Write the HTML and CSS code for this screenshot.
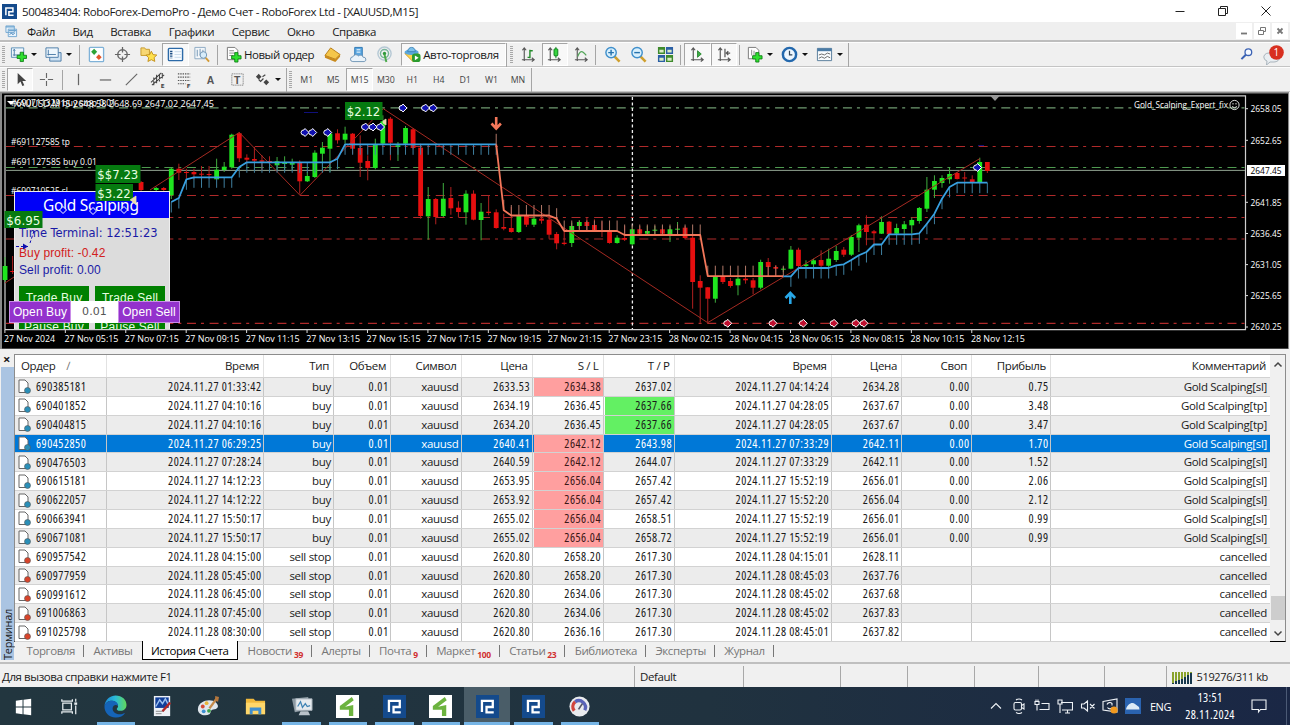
FILE: index.html
```html
<!DOCTYPE html>
<html lang="ru">

<head>
  <meta charset="UTF-8" />
  <title>500483404: RoboForex-DemoPro</title>
  <link rel="stylesheet" href="styles.css">
</head>

<body>
  <svg class="defs" width="0" height="0">
    <defs>
      <symbol id="logo-rf" viewBox="0 0 24 24">
        <rect width="24" height="24" fill="#144a8c" />
        <path d="M6.2 17.8V6.2h11.3v6.3H11v5.6h7.5" fill="none" stroke="#fff" stroke-width="2.4" />
      </symbol>
      <symbol id="logo-green" viewBox="0 0 24 24">
        <rect width="24" height="24" fill="#fff" />
        <path d="M16.500 2L4 11.500v4h9.500V22H18V10.500l-8.500 1.700 9-6.700z" fill="#6cb33f" />
      </symbol>
      <symbol id="axes" viewBox="0 0 18 18">
        <path d="M4.500 2v14M2 14.500h13M2.500 4.500l2-2.500 2 2.500M12.500 12.500l2.500 2-2.500 2" fill="none" stroke="#555" stroke-width="1.200" />
      </symbol>
      <symbol id="plus" viewBox="0 0 12 12">
        <path d="M4.300 1h3.400v3.300H11v3.400H7.700V11H4.300V7.700H1V4.300h3.300z" fill="#2fe02f" stroke="#0a7a12" stroke-width=".9" />
      </symbol>
    </defs>
  </svg>

  <div class="titlebar">
    <svg class="app-icon" viewBox="0 0 24 24"><use href="#logo-rf" /></svg>
    <span class="title">500483404: RoboForex-DemoPro - Демо Счет - RoboForex Ltd - [XAUUSD,M15]</span>
    <div class="win-buttons">
      <svg viewBox="0 0 12 12"><path d="M1.500 6.500h9" /></svg>
      <svg viewBox="0 0 12 12"><path d="M1.500 3.500h7v7h-7zM3.500 3.500v-2h7v7h-2" /></svg>
      <svg viewBox="0 0 12 12"><path d="M1.500 1.500l9 9M10.500 1.500l-9 9" /></svg>
    </div>
  </div>

  <div class="menubar">
    <svg class="menu-icon" viewBox="0 0 14 14">
      <path d="M1 1h9v7H1zM3.500 4.500h9v8h-9z" fill="#eaf4fc" stroke="#6fa5cf" />
      <path d="M1 2h9M4 6h8" stroke="#6fa5cf" stroke-width="1.500" />
      <path d="M5 10.500l2-2 1.500 2 2-2" fill="none" stroke="#3a7bb5" />
    </svg>
    <span class="menu m1">Файл</span>
    <span class="menu">Вид</span>
    <span class="menu">Вставка</span>
    <span class="menu">Графики</span>
    <span class="menu">Сервис</span>
    <span class="menu">Окно</span>
    <span class="menu">Справка</span>
    <div class="child-buttons">
      <svg viewBox="0 0 16 16"><path d="M5 10.500h6" stroke-width="1.800" /></svg>
      <svg viewBox="0 0 16 16"><path d="M4.500 7.500h5v4h-5zM6.500 7v-2.500h5v4H10" /></svg>
      <svg viewBox="0 0 16 16"><path d="M5.500 5.500l5 5M10.500 5.500l-5 5" stroke-width="1.800" /></svg>
    </div>
  </div>

  <div class="toolbar main-tools">
    <i class="grip"></i>
    <div class="tool drop">
      <svg viewBox="0 0 18 18"><path d="M1.500 2h13v10h-13z" fill="#eef6fc" stroke="#5b8fb8" /><path d="M4.500 3.500v7M3 9.500h9M3.500 5l1-1.500 1 1.500" fill="none" stroke="#4a7ba8" /><use href="#plus" x="6.500" y="5.500" width="12" height="12" /></svg>
      <i class="arrow"></i>
    </div>
    <div class="tool drop">
      <svg viewBox="0 0 18 18"><path d="M5 7h12v9H5z" fill="#cfe2f2" stroke="#4a7ba8" /><path d="M1 2h13v10H1z" fill="#eef6fc" stroke="#4a7ba8" /><path d="M3.500 4v6M2.500 9h9" fill="none" stroke="#4a7ba8" /></svg>
      <i class="arrow"></i>
    </div>
    <i class="sep"></i>
    <div class="tool"><svg viewBox="0 0 18 18"><rect x="1.500" y="1.500" width="15" height="15" rx="1" fill="#fdfeff" stroke="#7fb2d8" stroke-width="1.400" /><path d="M6.500 3l3.200 3.200-3.200 3.200-3.200-3.200z" fill="#2aa336" /><path d="M11.500 8.800l3 3-3 3-3-3z" fill="#e2552a" /></svg></div>
    <div class="tool"><svg viewBox="0 0 18 18"><circle cx="9" cy="9" r="5" fill="none" stroke="#666" stroke-width="1.500" /><path d="M9 1v6M9 11v6M1 9h6M11 9h6" stroke="#666" stroke-width="1.300" /></svg></div>
    <div class="tool"><svg viewBox="0 0 18 18"><path d="M1 2h4l1 1.500h4V10H1z" fill="#f7d774" stroke="#c79a2b" /><path d="M12 5.500l1.800 3.600 4 .5-2.900 2.700.8 4L12 14.500l-3.600 1.900.8-4-2.900-2.800 4-.5z" fill="#ffe14d" stroke="#c28f1b" /></svg></div>
    <div class="tool pressed"><svg viewBox="0 0 18 18"><rect x="1.500" y="2.500" width="15" height="13" rx="1" fill="#f6fbff" stroke="#2c6aa8" stroke-width="1.500" /><path d="M4.500 5v8" stroke="#1b4d84" stroke-width="2.500" stroke-dasharray="1.500 1" /><path d="M8 6h7M8 9h7M8 12h7" stroke="#c7daea" /></svg></div>
    <div class="tool"><svg viewBox="0 0 18 18"><path d="M2 1.500h11v12H2z" fill="#f4f7fa" stroke="#8ba9c2" /><path d="M4.500 4v7M7.500 3v7M10.500 4v5" stroke="#6f93b3" /><circle cx="11" cy="9.500" r="3.500" fill="#d7ecfa" stroke="#6f93b3" /><path d="M13.500 12.500l3.500 4" stroke="#d39a35" stroke-width="2" /></svg></div>
    <i class="sep"></i>
    <div class="tool order">
      <svg viewBox="0 0 18 18"><path d="M2.500 1.500h8l3 3v10h-11z" fill="#fff" stroke="#777" /><path d="M4.500 5h5M4.500 7.500h6M4.500 10h4" stroke="#888" /><use href="#plus" x="6" y="6" width="12" height="12" /></svg>
      <span>Новый ордер</span>
    </div>
    <div class="tool"><svg viewBox="0 0 18 18"><path d="M7 2l10 7-5 5L1 10z" fill="#f5c64a" stroke="#b77b14" /><path d="M1 10l11 4 5-5v2.500L12 17 1 12.500z" fill="#c98a1c" /></svg></div>
    <div class="tool"><svg viewBox="0 0 18 18"><path d="M5 1.500h8v10H5z" fill="#5ba7e0" stroke="#2d77b4" /><path d="M7 4h4M7 6.500h4" stroke="#fff" /><path d="M3 16.500a2.500 2.500 0 010-5 3.500 3.500 0 016-1 3 3 0 015 1.500 2 2 0 011 4.500z" fill="#eaf3fa" stroke="#6f94b5" /></svg></div>
    <div class="tool"><svg viewBox="0 0 18 18" fill="none"><circle cx="9" cy="8" r="7" stroke="#b5c8d4" stroke-width="1.500" /><circle cx="9" cy="8" r="4.300" stroke="#76b49a" stroke-width="1.500" /><circle cx="9" cy="8" r="1.800" fill="#2f9a3b" /><path d="M9 9l2 8" stroke="#4caa4a" stroke-width="2" /></svg></div>
    <div class="tool auto pressed">
      <svg viewBox="0 0 18 18"><path d="M1 8h14l-5 9z" fill="#ffd34d" stroke="#d09a20" /><ellipse cx="8" cy="6.500" rx="7.500" ry="3" fill="#5aa7dc" /><path d="M4 6c0-6 8-6 8 0z" fill="#7cc0ea" stroke="#3d84b9" /><rect x="8.500" y="8" width="9" height="9" rx="3" fill="#2b9c2f" /><path d="M11.500 10l4 2.500-4 2.500z" fill="#fff" /></svg>
      <span>Авто-торговля</span>
    </div>
    <i class="sep tight"></i>
    <i class="grip"></i>
    <div class="tool"><svg viewBox="0 0 18 18"><use href="#axes" /><path d="M10.500 4v9M10.500 5h3M8 12h2.500" stroke="#238a2b" stroke-width="1.500" /></svg></div>
    <div class="tool pressed"><svg viewBox="0 0 18 18"><use href="#axes" /><path d="M10.500 1v12" stroke="#0c7d1c" /><rect x="8.500" y="3" width="4" height="7.500" rx="1" fill="#37d43e" stroke="#0c7d1c" /></svg></div>
    <div class="tool"><svg viewBox="0 0 18 18"><use href="#axes" /><path d="M5 11c3-7 5-6 9-1" fill="none" stroke="#54a65a" stroke-width="1.300" /></svg></div>
    <i class="sep near"></i>
    <div class="tool"><svg viewBox="0 0 18 18"><path d="M11 11l5.500 5.500" stroke="#cf9f2d" stroke-width="2.800" /><circle cx="7.500" cy="7" r="5.500" fill="#d9f0fd" stroke="#3f8fcb" stroke-width="1.500" /><path d="M4.500 7h6M7.500 4v6" stroke="#2672ad" stroke-width="1.500" /></svg></div>
    <div class="tool"><svg viewBox="0 0 18 18"><path d="M11 11l5.500 5.500" stroke="#cf9f2d" stroke-width="2.800" /><circle cx="7.500" cy="7" r="5.500" fill="#d9f0fd" stroke="#3f8fcb" stroke-width="1.500" /><path d="M4.500 7h6" stroke="#2672ad" stroke-width="1.500" /></svg></div>
    <div class="tool"><svg viewBox="0 0 18 18"><path d="M1 1h7.500v7.500H1zM9.500 9.500H17V17H9.500z" fill="#3e8a2c" /><path d="M9.500 1H17v7.500H9.500zM1 9.500h7.500V17H1z" fill="#2a5fa5" /><path d="M2.500 4h4.500v3H2.500zM11 4h4.500v3H11zM2.500 12.500h4.500v3H2.500zM11 12.500h4.500v3H11z" fill="#d8ecc6" /></svg></div>
    <i class="sep"></i>
    <div class="tool pressed"><svg viewBox="0 0 18 18"><use href="#axes" /><path d="M9 5l4 3.500L9 12z" fill="#3cab45" stroke="#167a20" stroke-width=".8" /></svg></div>
    <div class="tool pressed"><svg viewBox="0 0 18 18"><use href="#axes" /><path d="M9.500 3v9M15 7.500h-4M13 5.500l-2 2 2 2" fill="none" stroke="#555" stroke-width="1.300" /></svg></div>
    <i class="sep"></i>
    <div class="tool drop">
      <svg viewBox="0 0 18 18"><path d="M2.500 1.500h8l3 3v9h-11z" fill="#fff" stroke="#777" /><path d="M6 4v6M8.500 5v6" stroke="#888" /><use href="#plus" x="6" y="6" width="12" height="12" /></svg>
      <i class="arrow"></i>
    </div>
    <div class="tool drop">
      <svg viewBox="0 0 18 18"><circle cx="9" cy="9" r="7" fill="#eef7ff" stroke="#2368ad" stroke-width="2.600" /><path d="M9 5v4.500h3" fill="none" stroke="#345" stroke-width="1.300" /></svg>
      <i class="arrow"></i>
    </div>
    <div class="tool drop">
      <svg viewBox="0 0 18 18"><path d="M1.500 2.500h15v13h-15z" fill="#f8fbfd" stroke="#557b9a" /><path d="M1.500 4h15" stroke="#4b7ba5" stroke-width="3" /><path d="M3 9.500l3-1 3 1 3-2 3 1M3 13l3-1.500 3 1.500 3-2 3 1.500" fill="none" stroke="#666" /></svg>
      <i class="arrow"></i>
    </div>
    <i class="sep tight"></i>
    <div class="notices">
      <svg class="search" viewBox="0 0 14 14"><circle cx="9" cy="4.500" r="3.600" fill="#f5f9ff" stroke="#3b62b4" stroke-width="1.400" /><path d="M6.300 7.300L1.500 12" stroke="#3b62b4" stroke-width="2.200" /></svg>
      <svg class="chat" viewBox="0 0 22 20"><path d="M1 13a5 4 0 015-5h5a5 4 0 010 9H7l-3.500 3 .5-4a5 4 0 01-3-3z" fill="#e9eef2" stroke="#a9b4bc" /><circle cx="13.500" cy="7.500" r="7.300" fill="#d83020" /></svg>
      <b>1</b>
    </div>
  </div>

  <div class="toolbar draw-tools">
    <i class="grip"></i>
    <div class="tool pressed"><svg viewBox="0 0 18 18"><path d="M6 2v12l3-3 2 5 2-1-2-4.500h4z" fill="#444" /></svg></div>
    <div class="tool"><svg viewBox="0 0 18 18"><path d="M9 2v5.500M9 10.500V16M2 9h5.500M10.500 9H16" stroke="#666" stroke-width="1.200" /></svg></div>
    <i class="sep"></i>
    <div class="tool"><svg viewBox="0 0 18 18"><path d="M9 3v12" stroke="#666" stroke-width="1.300" /></svg></div>
    <div class="tool"><svg viewBox="0 0 18 18"><path d="M3 9.500h12" stroke="#666" stroke-width="1.300" /></svg></div>
    <div class="tool"><svg viewBox="0 0 18 18"><path d="M3 15L15 3" stroke="#666" stroke-width="1.200" /></svg></div>
    <div class="tool"><svg viewBox="0 0 18 18"><path d="M1 12L12 2M2 15L15 4M4 7v8M7 4v9M10 3v8M13 2v6" stroke="#444" stroke-width="1.100" /><text x="11.500" y="17.500">E</text></svg></div>
    <div class="tool"><svg viewBox="0 0 18 18"><path d="M2 3h13M2 6.500h13M2 10h13M2 13.500h8" stroke="#555" stroke-width="1.200" stroke-dasharray="1.500 1" /><text x="11.500" y="18">F</text></svg></div>
    <div class="tool"><svg viewBox="0 0 18 18"><text class="big" x="5" y="13.500">A</text></svg></div>
    <div class="tool"><svg viewBox="0 0 18 18"><rect x="3" y="3" width="12" height="12" fill="none" stroke="#666" stroke-dasharray="1 1" /><text class="big" x="5.200" y="13.500">T</text></svg></div>
    <div class="tool drop">
      <svg viewBox="0 0 18 18"><path d="M2 6l3-3 3 3-3 3zM10 12l3-3 3 3-3 3z" fill="#444" /><path d="M5 9l2 2 3-3M9 6l3-2" fill="none" stroke="#444" stroke-width="1.300" /></svg>
      <i class="arrow"></i>
    </div>
    <i class="sep tight"></i>
    <i class="grip"></i>
    <div class="tool tf">M1</div>
    <div class="tool tf">M5</div>
    <div class="tool tf pressed">M15</div>
    <div class="tool tf">M30</div>
    <div class="tool tf">H1</div>
    <div class="tool tf">H4</div>
    <div class="tool tf">D1</div>
    <div class="tool tf">W1</div>
    <div class="tool tf">MN</div>
    <i class="sep tight"></i>
  </div>

  <div class="chart">
    <svg id="chart" viewBox="0 92 1290 258"></svg>
    <div class="panel">
      <div class="panel-title">Gold Scalping</div>
      <div class="panel-body">
        <p class="clock-line">Time Terminal: 12:51:23</p>
        <p class="buy-line">Buy profit: -0.42</p>
        <p class="sell-line">Sell profit: 0.00</p>
        <div class="panel-buttons">
          <span>Trade Buy</span>
          <span>Trade Sell</span>
          <span>Pause Buy</span>
          <span>Pause Sell</span>
        </div>
      </div>
    </div>
    <div class="quick">
      <span class="q-btn">Open Buy</span>
      <span class="q-lot">0.01</span>
      <span class="q-btn">Open Sell</span>
    </div>
    <svg id="labels" viewBox="0 92 1290 258"></svg>
  </div>

  <div class="terminal">
    <div class="side">
      <span class="close">×</span>
      <div class="side-bar"><span>Терминал</span></div>
    </div>
    <div class="history">
      <div class="table-wrap">
        <div class="table" id="table">
          <div class="row head">
            <span class="left">Ордер<i class="sort">∕</i></span>
            <span>Время</span>
            <span>Тип</span>
            <span>Объем</span>
            <span>Символ</span>
            <span>Цена</span>
            <span>S / L</span>
            <span>T / P</span>
            <span>Время</span>
            <span>Цена</span>
            <span>Своп</span>
            <span>Прибыль</span>
            <span>Комментарий</span>
          </div>
        </div>
        <div class="scroll">
          <svg viewBox="0 0 10 10"><path d="M1.500 6.500L5 3l3.500 3.500" /></svg>
          <i class="thumb"></i>
          <svg viewBox="0 0 10 10"><path d="M1.500 3.500L5 7l3.500-3.500" /></svg>
        </div>
      </div>
      <div class="tabs">
        <span class="tab">Торговля</span>
        <span class="tab last">Активы</span>
        <span class="tab active">История Счета</span>
        <span class="tab">Новости<sub>39</sub></span>
        <span class="tab">Алерты</span>
        <span class="tab">Почта<sub>9</sub></span>
        <span class="tab">Маркет<sub>100</sub></span>
        <span class="tab">Статьи<sub>23</sub></span>
        <span class="tab">Библиотека</span>
        <span class="tab">Эксперты</span>
        <span class="tab">Журнал</span>
      </div>
    </div>
  </div>

  <div class="statusbar">
    <span>Для вызова справки нажмите F1</span>
    <span>Default</span>
    <span></span>
    <span></span>
    <span></span>
    <span></span>
    <span></span>
    <span></span>
    <span class="traffic">
      <svg viewBox="0 0 22 13"><path d="M1 13V1M4 13V1M7 13V1M10 13V1M13 13V1M16 13V1M19 13V1" stroke="#8aa32c" stroke-width="2" /><path d="M1 13v-1M4 13v-3M7 13V9M10 13V8M13 13V6M16 13V4M19 13V2" stroke="#17384d" stroke-width="2" /></svg>
      519276/311 kb
    </span>
  </div>

  <div class="taskbar">
    <div class="app"><svg viewBox="0 0 24 24"><path d="M4 6l7-1v7H4zM12 5l8-1.200V12h-8zM4 13h7v7l-7-1zM12 13h8v8.200L12 20z" fill="#fff" /></svg></div>
    <div class="app"><svg viewBox="0 0 24 24" fill="none" stroke="#e8edf0" stroke-width="1.300"><path d="M5 8.500h9v7H5zM4 4.500v2h11v-2M4 19.500v-2h11v2M18.500 4v3M18.500 11v9" /><path d="M17 9h3" stroke-width="2.500" /></svg></div>
    <div class="app open">
      <svg viewBox="0 0 24 24">
        <defs><linearGradient id="edge" x1="0" y1=".3" x2="1" y2=".3"><stop offset="0" stop-color="#1b86d8" /><stop offset=".5" stop-color="#2cbcd6" /><stop offset="1" stop-color="#62d95a" /></linearGradient></defs>
        <path d="M.5 11C1.500 4 7 .5 12 .5 19 .5 23.500 5 23.500 10.500c0 4-3 6-6 6-3.500 0-4.500-1.500-4-2.500 1-1 1.500-2 1-3.500C13.500 7 10 5.500 7 6 4 6.500 2 8 .5 11z" fill="url(#edge)" />
        <path d="M.5 11C2 7.500 5 6 8 6c4 0 7 2.500 6.500 5.500C13 9.500 9.500 10 9 13.500c-.5 4 4 7.500 9 6.500 1.500-.3 3-1 4-1-2 3-6 4.700-10 4.500C5 23.500 0 18 .5 11z" fill="#1564b8" />
      </svg>
    </div>
    <div class="app"><svg viewBox="0 0 24 24"><path d="M3 1h17v21H3z" fill="#eef1f6" /><path d="M4.500 2.500h14v11h-14z" fill="#123f9a" /><path d="M5 12l4-7 3 4 3-5 3 6" stroke="#9cc0f0" stroke-width="1.500" fill="none" /><path d="M5 17h8M5 19.500h6" stroke="#888" /><path d="M20 8l-8 9" stroke="#b02828" stroke-width="2.500" /></svg></div>
    <div class="app"><svg viewBox="0 0 24 24"><path d="M1 14C2 6 14 3 20 8c4 4 1 7-3 7-3 0-2 3-4 5-5 3-13 0-12-6z" fill="#dfe6ec" /><circle cx="6" cy="12" r="2" fill="#d64a35" /><circle cx="10" cy="8.500" r="2" fill="#e8b53a" /><circle cx="7" cy="17" r="2" fill="#3d8fd1" /><circle cx="12.500" cy="16.500" r="2" fill="#3aa04a" /><path d="M21 3l-8 11" stroke="#c58a4a" stroke-width="2.500" /><path d="M19 1l4 1-1 5-3-1z" fill="#b5773d" /></svg></div>
    <div class="app"><svg viewBox="0 0 24 24"><path d="M2 4h8l2 2h10v14H2z" fill="#f0b93c" /><path d="M2 8h20v12H2z" fill="#ffd76a" /><path d="M6 20v-7h12v7h-3v-3.500H9V20z" fill="#3f8fd0" /></svg></div>
    <div class="app open"><svg viewBox="0 0 24 24"><path d="M2 4l17-2 1 13-15 3z" fill="#8d9aa3" /><path d="M6 4h17v12H6z" fill="#e6ebef" stroke="#a4afb7" /><path d="M8 12l3-5 2 6 3-4 2 3 3-1" fill="none" stroke="#3f83b4" stroke-width="1.300" /><path d="M11 17h8l2 4H9z" fill="#b9c2c9" /></svg></div>
    <div class="app open"><svg><use href="#logo-green" /></svg></div>
    <div class="app open"><svg><use href="#logo-rf" /></svg></div>
    <div class="app open"><svg><use href="#logo-green" /></svg></div>
    <div class="app open current"><svg><use href="#logo-rf" /></svg></div>
    <div class="app open"><svg><use href="#logo-rf" /></svg></div>
    <div class="app open"><svg viewBox="0 0 24 24"><circle cx="12" cy="12" r="10.500" fill="#e9ebee" /><path d="M6.500 16.500A7 7 0 017.500 7" fill="none" stroke="#d2453c" stroke-width="3.500" /><path d="M7.500 7a7 7 0 0110 9" fill="none" stroke="#5a63b8" stroke-width="3.500" /><path d="M11 15l4-6" stroke="#556" stroke-width="1.800" /></svg></div>

    <div class="tray">
      <svg viewBox="0 0 16 16"><path d="M3 10.500l5-5 5 5" /></svg>
      <svg viewBox="0 0 16 16"><rect x="3" y="4.500" width="7.500" height="7.500" rx="1.500" /><path d="M10.500 7.500l2.500-1.500v5l-2.500-1.500M5 2c2-1.300 4-1.300 6 0M5 14.500c2 1.300 4 1.300 6 0" /></svg>
      <svg viewBox="0 0 16 16"><path d="M1 3.500v3h4v-3zM2 3.500v-2M4 3.500v-2M3 6.500v6M7.500 5.500H15v6H5.500" /></svg>
      <svg viewBox="0 0 16 16"><path d="M4 4.500h11.500v7.500H5M8 15h5M10.500 12v3M1 2h4v4H1zM3 6v9" /></svg>
      <svg viewBox="0 0 16 16"><path d="M1.500 6H4l3.500-3v10L4 10H1.500zM10 6l4.500 4.500M14.500 6L10 10.500" /></svg>
      <svg viewBox="0 0 16 16"><path d="M1 3.500L15 1v13L1 12z" /><path d="M5 6.500a3 3 0 015-1v2M10.500 9.500a3 3 0 01-5 0" /><circle cx="12" cy="12" r="3.600" fill="#f29a1f" stroke="none" /></svg>
      <svg viewBox="0 0 16 16"><rect width="16" height="16" fill="#2a63b0" stroke="none" /><path d="M1 11.500c1-5 6-8 9-5.500l4 3 .5 2.500z" fill="#dceaf6" stroke="none" /></svg>
      <span class="lang">ENG</span>
      <span class="clock">13:51<br>28.11.2024</span>
      <svg class="action" viewBox="0 0 16 16"><path d="M1 2h14v9.500H9.500L7.500 14v-2.500H1z" /></svg>
      <i class="peek"></i>
    </div>
  </div>
  <script src="script.js"></script>
</body>

</html>
```
FILE: styles.css
```css
* {
  box-sizing: border-box;
}

body {
  margin: 0;
  width: 1290px;
  height: 725px;
  overflow: hidden;
  background: #f0f0f0;
  font-family: "Open Sans", "Noto Sans", sans-serif;
  font-size: 11.5px;
  letter-spacing: -0.3px;
  color: #1a1a1a;
  display: flex;
  flex-direction: column;
}

.defs {
  position: absolute;
}

i {
  font-style: normal;
}

/* title and menu */
.titlebar {
  height: 22px;
  background: #fff;
  display: flex;
  align-items: center;
  padding-left: 2px;
  flex: none;
}

.app-icon {
  width: 15px;
  height: 15px;
}

.title {
  margin-left: 5px;
  letter-spacing: -0.38px;
  white-space: nowrap;
}

.win-buttons {
  margin-left: auto;
  display: flex;
  gap: 31px;
  padding-right: 18px;
}

.win-buttons svg {
  width: 12px;
  height: 12px;
  fill: none;
  stroke: #222;
}

.menubar {
  height: 20px;
  display: flex;
  align-items: center;
  background: #efefef;
  border-bottom: 2px solid #bdbdbd;
  padding-left: 5px;
  letter-spacing: -0.4px;
  flex: none;
}

.menu-icon {
  width: 13px;
  height: 13px;
}

.menu {
  margin-left: 17.6px;
}

.m1 {
  margin-left: 9px;
}

.child-buttons {
  margin-left: auto;
  display: flex;
  gap: 2px;
  padding-right: 2px;
}

.child-buttons svg {
  width: 16px;
  height: 16px;
  background: #fff;
  fill: none;
  stroke: #777;
}

/* toolbars */
.toolbar {
  height: 25px;
  display: flex;
  align-items: center;
  border-top: 1px solid #fdfdfd;
  border-bottom: 1px solid #c4c4c4;
  flex: none;
}

.main-tools {
  position: relative;
}

.grip {
  width: 3px;
  height: 17px;
  margin: 0 2px 0 2px;
  background: repeating-linear-gradient(#a8a8a8 0 1px, #efefef 1px 2px);
}

.main-tools .tight + .grip {
  margin-left: 3px;
}

.sep {
  width: 1px;
  height: 20px;
  margin: 0 3px 0 2px;
  background: #a5a5a5;
  flex: none;
}

.sep.near {
  margin: 0 3px 0 1px;
}

.sep.tight {
  height: 24px;
  margin: 0;
}

.tool {
  width: 26.4px;
  height: 23px;
  display: flex;
  align-items: center;
  justify-content: center;
  flex: none;
}

.tool svg {
  width: 17px;
  height: 17px;
  overflow: visible;
  flex: none;
}

.tool text {
  font: bold 6px "DejaVu Sans", sans-serif;
  fill: #444;
}

.tool text.big {
  font: bold 11px "Liberation Sans", sans-serif;
  fill: #555;
}

.drop {
  width: 35px;
  justify-content: flex-start;
  padding-left: 3px;
}

.arrow {
  margin-left: 4px;
  border: 3px solid transparent;
  border-top: 3px solid #111;
  border-bottom: 0;
}

.pressed {
  background: #f8f8f8;
  border: 1px solid #fff;
  border-top-color: #a5a5a5;
  border-left-color: #a5a5a5;
}

.order {
  width: 98px;
  justify-content: flex-start;
  padding-left: 4px;
  letter-spacing: -0.45px;
  white-space: nowrap;
}

.order span,
.auto span {
  margin-left: 2px;
}

.auto {
  width: 105px;
  margin-left: 3px;
  justify-content: flex-start;
  padding-left: 2px;
  letter-spacing: -0.4px;
  white-space: nowrap;
}

.tf {
  font-size: 8.8px;
  letter-spacing: -0.1px;
  color: #444;
}

.notices {
  margin-left: auto;
  display: flex;
  align-items: center;
  gap: 10px;
  padding-right: 5px;
  position: relative;
}

.search {
  width: 13px;
  height: 13px;
}

.chat {
  width: 22px;
  height: 20px;
}

.notices b {
  position: absolute;
  right: 11px;
  top: 0;
  font-size: 10px;
  font-weight: normal;
  color: #fff;
}

/* chart */
.chart {
  position: relative;
  height: 258px;
  overflow: hidden;
  flex: none;
}

#chart {
  display: block;
  width: 1290px;
  height: 258px;
}

#labels {
  position: absolute;
  left: 0;
  top: 0;
  width: 1290px;
  height: 258px;
}

.chart text {
  font-family: "Open Sans", "Noto Sans", sans-serif;
  font-size: 9px;
  letter-spacing: 0;
  fill: #fff;
}

.chart text.money {
  font-family: "DejaVu Sans", sans-serif;
  font-size: 13px;
  fill: #e9ffe0;
}

.panel {
  position: absolute;
  left: 14px;
  top: 99px;
  width: 156px;
  height: 138px;
  overflow: hidden;
  border: 1px solid #eee;
  border-bottom: 0;
  background: #dcdcdc;
}

.panel-title {
  height: 26px;
  line-height: 27px;
  background: #0000f8;
  color: #fff;
  font-size: 15.5px;
  padding-left: 28px;
  font-family: "Noto Sans", sans-serif;
}

.panel-body {
  padding: 5px 3px 0 4px;
}

.panel p {
  margin: 0;
  line-height: 20px;
  font-size: 12px;
  font-family: "Liberation Sans", sans-serif;
  letter-spacing: 0.1px;
  color: #1a1aa5;
}

.panel p.clock-line {
  font-family: "DejaVu Sans", sans-serif;
  font-size: 11.5px;
  letter-spacing: -0.05px;
}

.panel p.buy-line {
  color: #d22020;
}

.panel p.sell-line {
  line-height: 15px;
}

.panel-buttons {
  display: grid;
  grid-template-columns: 70px 70px;
  gap: 5px 6px;
  margin-top: 8px;
}

.panel-buttons span {
  height: 24px;
  line-height: 25px;
  background: #008000;
  color: #e6ffe0;
  text-align: center;
  font-family: "Liberation Sans", sans-serif;
  font-size: 12px;
  letter-spacing: 0.2px;
}

.quick {
  position: absolute;
  left: 9px;
  top: 209px;
  height: 21px;
  width: 171px;
  display: grid;
  grid-template-columns: 62px 47px 62px;
  font-family: "Liberation Sans", sans-serif;
  font-size: 12px;
  line-height: 20px;
  letter-spacing: 0.1px;
  text-align: center;
  white-space: nowrap;
}

.q-btn {
  background: #9332cc;
  border: 1px solid #c98be8;
  color: #fff;
}

.q-lot {
  background: #fff;
  color: #555;
  line-height: 22px;
  font-family: "DejaVu Sans", sans-serif;
  font-size: 11px;
}

/* terminal */
.terminal {
  height: 314px;
  display: flex;
  padding-top: 4px;
  border-bottom: 2px solid #bfbfbf;
  flex: none;
}

.side {
  width: 14px;
  display: flex;
  flex-direction: column;
}

.close {
  height: 13px;
  line-height: 10px;
  text-align: center;
  font-size: 13px;
  font-weight: bold;
  padding-right: 1px;
}

.side-bar {
  flex: 1;
  margin: 0 0 2px 1px;
  background: #aac4e2;
  writing-mode: vertical-rl;
  transform: rotate(180deg);
  font-size: 11px;
  line-height: 13px;
}

.history {
  flex: 1;
  display: flex;
  flex-direction: column;
  min-width: 0;
}

.table-wrap {
  height: 288px;
  border: 1px solid #8c8c8c;
  border-bottom: 1px solid #000;
  width: 1272px;
  display: flex;
  background: #fff;
}

.table {
  width: 1255px;
}

.row {
  display: grid;
  grid-template-columns: 92px 157px 70px 57px 70.5px 71px 71px 71px 157px 70.5px 70px 79px 219px;
  height: 18.86px;
  line-height: 17.5px;
  background: #fff;
  border-bottom: 1px solid #d2d2d2;
}

.row span {
  text-align: right;
  border-right: 1px solid #c6c6c6;
  padding-right: 2px;
  white-space: nowrap;
  overflow: hidden;
}

.row span:last-child {
  padding-right: 3px;
  border-right: 0;
}

.row .num {
  font-size: 12px;
  font-stretch: 75%;
  letter-spacing: 0.48px;
  padding-right: 1.5px;
}

.row.gray {
  background: #ececec;
}

.row.selected {
  background: #0078d7;
  color: #fff;
}

.row .id {
  text-align: left;
  display: flex;
  align-items: center;
  padding-left: 3px;
  gap: 5px;
}

.id svg {
  width: 13px;
  height: 15px;
}

.row .sl {
  margin-left: 1px;
  background: #ff9f9f;
  color: #3a1616;
}

.row .tp {
  margin-left: 1px;
  background: #63f063;
}

.row.head {
  height: 23px;
  line-height: 22px;
  letter-spacing: -0.35px;
}

.row.head span {
  padding-right: 4px;
  border-color: #e2e2e2;
}

.row.head .left {
  text-align: left;
  padding-left: 6px;
}

.sort {
  margin-left: 11px;
  color: #777;
}

.scroll {
  width: 15px;
  background: #f0f0f0;
  display: flex;
  flex-direction: column;
  align-items: center;
  padding: 5px 0 3px;
}

.scroll svg {
  width: 10px;
  height: 10px;
  fill: none;
  stroke: #444;
  stroke-width: 1.5;
}

.thumb {
  width: 14px;
  height: 24px;
  background: #cdcdcd;
  margin: auto 0 8px;
}

.tabs {
  display: flex;
  height: 20px;
  padding-left: 3px;
  color: #777;
  letter-spacing: -0.4px;
  line-height: 17px;
}

.tab {
  position: relative;
  height: 18px;
  padding: 0 9px 0 9.5px;
  white-space: nowrap;
}

.tab::after {
  content: "";
  position: absolute;
  right: 0;
  top: 3px;
  height: 12px;
  border-right: 1px solid #777;
}

.tab.last::after,
.tab.active::after {
  display: none;
}

.tab.active {
  background: #fff;
  color: #000;
  border: 1px solid #000;
  border-top: 0;
  height: 19px;
  margin-top: -1px;
  padding: 0 8.5px;
  line-height: 19px;
}

.tab sub {
  color: #d03030;
  font-size: 8.5px;
  font-weight: bold;
  vertical-align: -3px;
  line-height: 0;
  margin-left: 2px;
}

/* status bar */
.statusbar {
  height: 23px;
  display: grid;
  grid-template-columns: 635px 109px 97px 67px 67px 64px 66px 62px 1fr;
  padding: 2px 0;
  flex: none;
}

.statusbar span {
  border-right: 1px solid #a8a8a8;
  padding-left: 5px;
  line-height: 21px;
  letter-spacing: -0.42px;
  white-space: nowrap;
}

.statusbar span:first-child {
  padding-left: 2px;
}

.statusbar .traffic {
  border: 0;
  font-size: 11px;
  letter-spacing: -0.35px;
}

.traffic svg {
  width: 22px;
  height: 13px;
  vertical-align: -3px;
}

/* taskbar */
.taskbar {
  height: 38px;
  display: flex;
  background: linear-gradient(90deg, #22363f, #20323f 55%, #1a2745);
  flex: none;
}

.app {
  width: 46.4px;
  display: flex;
  align-items: center;
  justify-content: center;
  position: relative;
}

.app svg {
  width: 23px;
  height: 23px;
}

.app.open::after {
  content: "";
  position: absolute;
  left: 4px;
  right: 4px;
  bottom: 0;
  height: 3px;
  background: #76b5e6;
}

.app.current {
  background: #4a5d68;
}

.app.current::after {
  left: 0;
  right: 0;
}

.tray {
  margin-left: auto;
  display: flex;
  align-items: center;
  color: #fff;
}

.tray svg {
  width: 16px;
  height: 16px;
  margin-right: 6.8px;
  fill: none;
  stroke: #eef2f6;
  stroke-width: 1.1;
}

.lang {
  width: 21px;
  margin-left: 2px;
  font-size: 11px;
  letter-spacing: -0.5px;
}

.clock {
  width: 76px;
  margin: 0 3px 0 1px;
  text-align: center;
  line-height: 17px;
  font-size: 12px;
  font-stretch: 75%;
  letter-spacing: 0.35px;
}

.tray .action {
  margin-right: 19px;
}

.peek {
  width: 4px;
  height: 38px;
  border-left: 1px solid #4b5a75;
}
```
FILE: script.js
```js
(function () {
  var NS = 'http://www.w3.org/2000/svg';
  var chart = document.getElementById('chart');
  var labels = document.getElementById('labels');
  var STEP = 7.556;
  var X0 = 307.3;

  function el(name, attrs, parent) {
    var node = document.createElementNS(NS, name);
    for (var key in attrs) {
      node.setAttribute(key, attrs[key]);
    }
    (parent || chart).appendChild(node);
    return node;
  }

  function text(str, x, y, width, parent, cls) {
    var t = el('text', { x: x, y: y, textLength: width, lengthAdjust: 'spacingAndGlyphs' }, parent);
    if (cls) t.setAttribute('class', cls);
    t.textContent = str;
    return t;
  }

  function xOf(i) {
    return X0 + i * STEP;
  }

  // frame
  el('rect', { x: 0, y: 92, width: 1290, height: 258, fill: '#f0f0f0' });
  el('rect', { x: 0, y: 92, width: 1289, height: 257, fill: '#8a8a8a' });
  el('rect', { x: 2, y: 93.5, width: 1286, height: 255, fill: '#000' });
  el('path', { d: 'M5 95.8H1245.5V329.7H5z', fill: 'none', stroke: '#cfcfcf', 'stroke-width': 1.2 });

  // order levels
  [[107.8, '#6f9a70'], [146.5, '#b02a2a'], [167.5, '#4f9a50'], [195.5, '#b02a2a'], [217.5, '#b02a2a'], [239, '#b02a2a'], [323.3, '#b02a2a']].forEach(function (l) {
    el('path', { d: 'M6 ' + l[0] + 'H1245', stroke: l[1], 'stroke-width': 1.2, 'stroke-dasharray': '9 5 3 5.62' });
  });
  el('path', { d: 'M6 170.4H1245', stroke: '#8fa08f', 'stroke-width': 1 });
  el('path', { d: 'M632.4 97V329', stroke: '#eee', 'stroke-width': 1.3, 'stroke-dasharray': '3 2.5' });

  // index, body top, body bottom, high, low, u = up / d = down
  var candles = [
    [-40, 266, 280, 257, 282, 'u'], [-39, 271, 272, 256, 274, 'd'], [-22, 182, 190, 181, 191, 'd'], [-20, 188, 190, 187, 191, 'u'],
    [-19, 188, 190, 187, 191, 'd'], [-18, 168.7, 195.3, 167, 199, 'u'], [-17, 168.7, 172.7, 163.7, 180, 'd'], [-16, 172, 173, 168.7, 178.7, 'd'],
    [-15, 172, 174.3, 168.7, 179.3, 'd'], [-14, 173.7, 174.7, 166, 180, 'd'], [-13, 174, 175, 166, 178.7, 'd'], [-12, 169.7, 179.3, 158.7, 179.3, 'u'],
    [-11, 166.7, 170, 162, 172, 'u'], [-10, 134.7, 167.3, 133.7, 168.7, 'u'], [-9, 133.3, 158.3, 132, 162, 'd'], [-8, 157.7, 159.7, 154.3, 162, 'd'],
    [-7, 159, 160.7, 147, 162, 'd'], [-6, 160.3, 161.7, 155.3, 170.3, 'd'], [-5, 161, 162, 156.3, 165.3, 'd'], [-4, 161.3, 165.3, 157, 170.3, 'u'],
    [-3, 163, 164, 156.3, 170.3, 'u'], [-2, 162, 164.7, 158.7, 170.3, 'u'], [-1, 163, 181.3, 160.3, 193.7, 'd'], [0, 176, 181.3, 172, 182, 'u'],
    [1, 152.7, 177, 150.3, 178, 'u'], [2, 147.7, 153.7, 142, 172, 'u'], [3, 133.7, 148.7, 132.7, 172, 'u'], [4, 133.3, 140.3, 129.3, 143.7, 'd'],
    [5, 133.7, 139.7, 126.7, 143.7, 'u'], [6, 133.7, 148.7, 133, 153.7, 'd'], [7, 148, 162.7, 135.3, 177, 'd'], [8, 161, 168, 155.3, 180.3, 'd'],
    [9, 144.3, 168, 138.7, 169.3, 'u'], [10, 121.3, 143.7, 115.3, 144.7, 'u'], [11, 118.7, 142.7, 117, 160.3, 'd'], [12, 145.3, 147, 142, 161, 'u'],
    [13, 128, 143.7, 126, 145.3, 'u'], [14, 129.3, 148, 128, 149.3, 'd'], [15, 147.7, 216, 143.7, 218.7, 'd'], [16, 199, 216.3, 187, 239.7, 'u'],
    [17, 199, 217, 198, 224.3, 'd'], [18, 198.7, 216, 183, 217, 'u'], [19, 198, 208.3, 187, 214.7, 'd'], [20, 207.7, 212, 201.3, 217, 'd'],
    [21, 193.7, 212.3, 190.3, 224.7, 'u'], [22, 193.7, 219.7, 190.3, 220.3, 'd'], [23, 211.7, 220, 203, 240.3, 'u'], [24, 211.7, 213, 195.3, 215.3, 'd'],
    [25, 212.3, 228, 209.3, 228.7, 'd'], [26, 227, 228.7, 213.7, 230.3, 'd'], [27, 228, 232, 207, 232.7, 'd'], [28, 216, 232, 215, 233, 'u'],
    [29, 215.3, 224.7, 214, 227, 'd'], [30, 218.7, 224.7, 216, 227, 'u'], [31, 218.7, 220.7, 215, 223.7, 'd'], [32, 219.7, 234.7, 216, 238.7, 'd'],
    [33, 234, 243.3, 232, 249.3, 'd'], [34, 242.7, 244, 232, 245.3, 'd'], [35, 226, 243, 222.7, 247, 'u'], [36, 222, 226, 220.3, 228.7, 'u'],
    [37, 222, 226, 218, 230.3, 'd'], [38, 225, 231, 219.3, 232, 'd'], [39, 230.7, 232, 221.3, 237, 'd'], [40, 231.3, 243, 230, 243.7, 'd'],
    [41, 237.7, 243, 235.3, 243.7, 'u'], [42, 238, 239.7, 226, 241, 'd'], [43, 229.3, 244.3, 226.3, 245.3, 'u'], [44, 229.3, 233.7, 226, 235, 'd'],
    [45, 231, 233.7, 226, 235, 'u'], [46, 229.7, 230.7, 226, 234, 'u'], [47, 229.3, 233.7, 226, 235, 'd'], [48, 229.3, 235.3, 226, 242, 'u'],
    [49, 228.7, 229.7, 222, 233.7, 'u'], [50, 227.7, 238, 226, 239, 'd'], [51, 237.7, 282, 236, 308.7, 'd'], [52, 281, 287.7, 275.3, 322.7, 'd'],
    [53, 287.3, 298.7, 287, 322.7, 'd'], [54, 276.3, 298.7, 276, 302.7, 'u'], [55, 277, 282, 276, 284, 'd'], [56, 281, 286, 278, 287.7, 'd'],
    [57, 278.7, 285.3, 277, 295.3, 'u'], [58, 278.7, 280.3, 276, 283.7, 'd'], [59, 280.3, 287.7, 278, 294.3, 'd'], [60, 262, 287.7, 259.7, 289.3, 'u'],
    [61, 262, 267, 258, 275.3, 'd'], [62, 267, 268.7, 265, 275, 'd'], [63, 268.7, 269.7, 267, 272, 'u'], [64, 249.7, 268.7, 246, 269.3, 'u'],
    [65, 249.7, 266, 247.7, 267, 'd'], [66, 264.3, 266, 260.3, 268.7, 'u'], [67, 260.3, 264.3, 258.7, 267, 'u'], [68, 260, 265.7, 250.3, 267, 'd'],
    [69, 258.7, 265.7, 248.7, 267, 'u'], [70, 251, 260, 246, 262, 'u'], [71, 249.7, 254.7, 247, 257, 'd'], [72, 237, 254.7, 235, 256, 'u'],
    [73, 225.3, 237.7, 223.7, 252, 'u'], [74, 224.7, 232, 215.3, 245.3, 'd'], [75, 231.3, 233.3, 230, 245.3, 'd'], [76, 222, 233.7, 216.3, 234, 'u'],
    [77, 221.7, 234.3, 221, 235, 'd'], [78, 228, 233.7, 223.7, 234, 'u'], [79, 224.3, 229, 221, 233.7, 'u'], [80, 220, 225.3, 217.7, 233.7, 'u'],
    [81, 208, 221, 207, 223.7, 'u'], [82, 189.7, 208.7, 177, 212, 'u'], [83, 181, 189.7, 175.3, 198, 'u'], [84, 178, 183, 175.3, 187.7, 'u'],
    [85, 174, 179.3, 167.3, 183.7, 'u'], [86, 173, 179, 172, 179.5, 'd'], [87, 177.5, 178.5, 172, 182, 'd'], [88, 179.3, 182, 175.3, 182.7, 'd'],
    [89, 162, 182, 157.7, 183, 'u'], [90, 162, 171, 162, 173, 'd']
  ];

  candles.forEach(function (c) {
    var x = xOf(c[0]);
    var up = c[5] === 'u';
    el('path', { d: 'M' + x + ' ' + c[3] + 'V' + c[4], stroke: up ? '#3fae3f' : '#b02020', 'stroke-width': 1 });
    el('rect', { x: x - 2.4, y: c[1], width: 4.8, height: c[2] - c[1], fill: up ? '#1fe51f' : '#e60f0f' });
  });

  // zigzag
  el('path', { d: 'M5 283L14 277M150 190L239.3 132.5L300 195.3L383.3 108.7L707.7 322.7L979.7 158.7', fill: 'none', stroke: '#a52a22', 'stroke-width': 1 });

  // trend line: value repeated from one index to the next
  function fill(list) {
    var out = [];
    list.forEach(function (r) {
      for (var i = r[0]; i <= r[1]; i++) {
        out.push([xOf(i), r[2]]);
      }
    });
    return out;
  }

  function trend(list, color, thin, dir, skip) {
    var pts = fill(list);
    pts.forEach(function (p, n) {
      if (n < skip) return;
      el('path', { d: 'M' + p[0] + ' ' + p[1] + 'v' + dir * 10.5, stroke: thin, 'stroke-width': 1 });
    });
    el('polyline', { points: pts.join(' '), fill: 'none', stroke: color, 'stroke-width': 1.8, 'stroke-linejoin': 'round' });
  }

  trend([[-18, -18, 202], [-17, -17, 198], [-16, -16, 179.3], [-15, -10, 177.3], [-9, -9, 167], [-8, 3, 162.3], [4, 4, 158.7], [5, 25, 144.3]], '#38a0e0', '#3f7f9f', 1, 0);
  trend([[25, 25, 144.3], [26, 26, 210.3], [27, 32, 215.5], [33, 33, 218.7], [34, 41, 231], [42, 52, 235], [53, 63, 276.2]], '#f3775a', '#b27868', -1, 0);
  trend([[63, 64, 276.3], [65, 69, 268], [70, 70, 265.3], [71, 71, 264.3], [72, 72, 260], [73, 73, 255.3], [74, 74, 252], [75, 76, 244.5], [77, 80, 234.3], [81, 81, 233.3], [82, 82, 223.7], [83, 83, 213.7], [84, 84, 198.7], [85, 85, 187], [86, 90, 182.7]], '#38a0e0', '#3f7f9f', 1, 1);

  el('path', { d: 'M496.2 117v11M491.5 123.5l4.7 5 4.7-5', fill: 'none', stroke: '#f3775a', 'stroke-width': 2.6 });
  el('path', { d: 'M790.3 304v-11M785.5 298l4.8-5 4.8 5', fill: 'none', stroke: '#28a8e8', 'stroke-width': 2.6 });
  el('path', { d: 'M304 112.5h14M978 145.5h6', stroke: '#10107a', 'stroke-width': 1 });
  el('path', { d: 'M990.5 96h9l-4.5 5z', fill: '#999' });

  function marker(x, y, color) {
    el('path', { d: 'M' + (x - 4) + ' ' + y + 'l.8-2 2.2-.6 1-1.4 4 4-4 4-1-1.4-2.2-.6z', fill: color, stroke: '#fff', 'stroke-width': 1 });
  }
  [[305, 132.5], [312.7, 132.5], [327.7, 132.5], [365.5, 127], [373, 127], [380.5, 127], [403, 108], [425.5, 108], [433.3, 108], [977.5, 167.5]].forEach(function (m) {
    marker(m[0], m[1], '#1010b0');
  });
  [727.7, 773, 803.3, 834, 856, 864].forEach(function (x) {
    marker(x, 323.3, '#c01030');
  });

  // price axis
  [['2658.05', 108.7], ['2652.65', 140.3], ['2641.85', 202.3], ['2636.45', 233.5], ['2631.05', 264.6], ['2625.65', 295.6], ['2620.25', 327]].forEach(function (p) {
    el('path', { d: 'M1246 ' + p[1] + 'h2', stroke: '#ddd' });
    text(p[0], 1250.5, p[1] + 3.3, 31);
  });
  el('rect', { x: 1247, y: 165, width: 38, height: 11, fill: '#fff' });
  text('2647.45', 1250.5, 173.8, 31).style.fill = '#000';

  // time axis
  ['27 Nov 2024', '27 Nov 05:15', '27 Nov 07:15', '27 Nov 09:15', '27 Nov 11:15', '27 Nov 13:15', '27 Nov 15:15', '27 Nov 17:15', '27 Nov 19:15', '27 Nov 21:15', '27 Nov 23:15', '28 Nov 02:15', '28 Nov 04:15', '28 Nov 06:15', '28 Nov 08:15', '28 Nov 10:15', '28 Nov 12:15'].forEach(function (t, n) {
    var x = 4 + n * 60.43;
    el('path', { d: 'M' + (x + 0.9) + ' 330v3', stroke: '#ddd' });
    text(t, x, 342, n ? 54 : 51);
  });

  // order captions, drawn one over another in the corner
  text('#690710525 sl', 11, 193.5, 57);
  text('#691127585 tp', 11, 144.5, 59);
  text('#691127585 buy 0.01', 11, 165, 86);
  text('#690711329 buy stop 0.01', 11, 106, 105);
  text('XAUUSD,M15  2648.58 2648.69 2647.02 2647.45', 14, 106.5, 200);
  el('path', { d: 'M7 101h8l-4 4z', fill: '#fff' });
  text('Gold_Scalping_Expert_fix', 1134, 107.5, 94);
  el('circle', { cx: 1234.5, cy: 105, r: 4.6, fill: 'none', stroke: '#ddd' });
  el('path', { d: 'M1232 106.5q2.5 2.5 5 0M1233 103v1.5M1236 103v1.5', fill: 'none', stroke: '#ddd' });

  // profit labels lie over the panel
  [['$2.12', 345, 102, 37.5, 18], ['$$7.23', 95.5, 165, 45, 18], ['$3.22', 95.5, 184, 37.5, 17], ['$6.95', 4.5, 211, 38, 17]].forEach(function (b) {
    el('rect', { x: b[1], y: b[2], width: b[3], height: b[4], fill: '#067a10' }, labels);
    text(b[0], b[1] + 1.8, b[2] + 13.7, b[3] - 4, labels, 'money');
  });
  [[63, 210], [93, 211], [124, 210]].forEach(function (m) {
    el('path', { d: 'M' + (m[0] - 3.5) + ' ' + m[1] + 'l3.5-3.5 3.5 3.5-3.5 3.5z', fill: '#0000f8', stroke: '#fff' }, labels);
  });
  el('path', { d: 'M130 200l6-4v9M383 121l3-2v6l-3-2z', fill: '#e8dcae', stroke: '#e8dcae', 'stroke-width': 0.8 }, labels);
  el('path', { d: 'M16 246.5h12M34 231l-4 12', fill: 'none', stroke: '#1010b0', 'stroke-dasharray': '3 2' }, labels);
  el('path', { d: 'M23 243.5l5 3-5 3z', fill: '#1010b0' }, labels);

  // account history
  var rows = [
    ['690385181', '2024.11.27 01:33:42', 'buy', '2633.53', '2634.38', '2637.02', '2024.11.27 04:14:24', '2634.28', '0.00', '0.75', 'sl'],
    ['690401852', '2024.11.27 04:10:16', 'buy', '2634.19', '2636.45', '2637.66', '2024.11.27 04:28:05', '2637.67', '0.00', '3.48', 'tp'],
    ['690404815', '2024.11.27 04:10:16', 'buy', '2634.20', '2636.45', '2637.66', '2024.11.27 04:28:05', '2637.67', '0.00', '3.47', 'tp'],
    ['690452850', '2024.11.27 06:29:25', 'buy', '2640.41', '2642.12', '2643.98', '2024.11.27 07:33:29', '2642.11', '0.00', '1.70', 'sl'],
    ['690476503', '2024.11.27 07:28:24', 'buy', '2640.59', '2642.12', '2644.07', '2024.11.27 07:33:29', '2642.11', '0.00', '1.52', 'sl'],
    ['690615181', '2024.11.27 14:12:23', 'buy', '2653.95', '2656.04', '2657.42', '2024.11.27 15:52:19', '2656.01', '0.00', '2.06', 'sl'],
    ['690622057', '2024.11.27 14:12:22', 'buy', '2653.92', '2656.04', '2657.42', '2024.11.27 15:52:20', '2656.04', '0.00', '2.12', 'sl'],
    ['690663941', '2024.11.27 15:50:17', 'buy', '2655.02', '2656.04', '2658.51', '2024.11.27 15:52:19', '2656.01', '0.00', '0.99', 'sl'],
    ['690671081', '2024.11.27 15:50:17', 'buy', '2655.02', '2656.04', '2658.72', '2024.11.27 15:52:19', '2656.01', '0.00', '0.99', 'sl'],
    ['690957542', '2024.11.28 04:15:00', 'sell stop', '2620.80', '2658.20', '2617.30', '2024.11.28 04:15:01', '2628.11'],
    ['690977959', '2024.11.28 05:45:00', 'sell stop', '2620.80', '2658.20', '2617.30', '2024.11.28 08:45:03', '2637.76'],
    ['690991612', '2024.11.28 06:45:00', 'sell stop', '2620.80', '2634.06', '2617.30', '2024.11.28 08:45:02', '2637.68'],
    ['691006863', '2024.11.28 07:45:00', 'sell stop', '2620.80', '2634.06', '2617.30', '2024.11.28 08:45:02', '2637.83'],
    ['691025798', '2024.11.28 08:30:00', 'sell stop', '2620.80', '2636.16', '2617.30', '2024.11.28 08:45:01', '2637.82']
  ];

  var html = '';
  rows.forEach(function (r, n) {
    var hit = r[10];
    var dot = hit ? '#2a8fb8' : '#d8442a';
    var icon = '<svg viewBox="0 0 13 15"><path d="M1 1h6l3 3v9.500H1z" fill="#fff" stroke="#666"/><circle cx="9.500" cy="11.500" r="3" fill="' + dot + '" stroke="#555" stroke-width=".6"/></svg>';
    var cells = [r[1], r[2], '0.01', 'xauusd', r[3], r[4], r[5], r[6], r[7], r[8] || '', r[9] || '', hit ? 'Gold Scalping[' + hit + ']' : 'cancelled'];
    html += '<div class="row' + (n % 2 ? '' : ' gray') + (n === 3 ? ' selected' : '') + '"><span class="id num">' + icon + r[0] + '</span>';
    cells.forEach(function (c, k) {
      var cls = /^\d/.test(c) ? 'num' : 'word';
      if (k === 5 && hit === 'sl') cls += ' sl';
      if (k === 6 && hit === 'tp') cls += ' tp';
      html += '<span class="' + cls + '">' + c + '</span>';
    });
    html += '</div>';
  });
  document.getElementById('table').innerHTML += html;
})();
```
